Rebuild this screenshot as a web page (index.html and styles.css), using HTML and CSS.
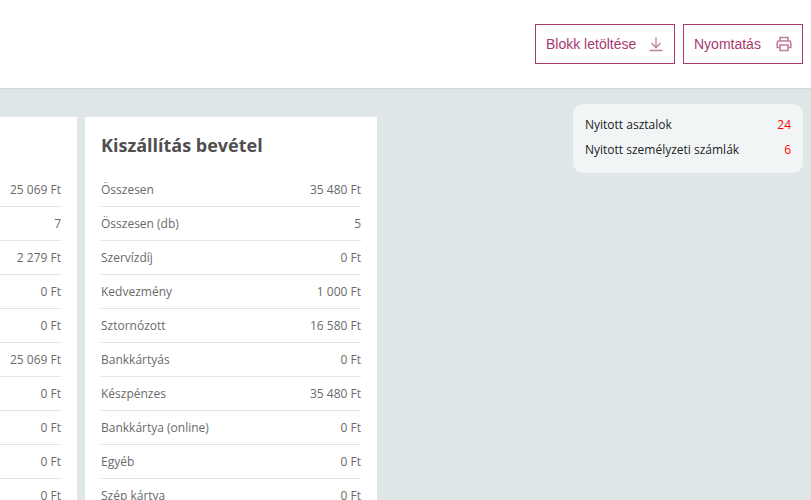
FILE: index.html
```html
<!DOCTYPE html>
<html lang="hu">
<head>
<meta charset="utf-8">
<title>Kimutatás</title>
<link rel="stylesheet" href="styles.css">
</head>
<body>
<header class="topbar">
  <button class="btn btn-download">Blokk letöltése
    <svg class="icon" viewBox="0 0 16 16" width="16" height="16"><path d="M8 1.5v9.5M3.5 7 8 11.5 12.500 7M1.500 14.500h13" fill="none" stroke="currentColor" stroke-width="1.3"/></svg>
  </button>
  <button class="btn btn-print">Nyomtatás
    <svg class="icon" viewBox="0 0 16 16" width="16" height="16"><path d="M4 5V1.500h8V5M4 11.500H1.200V6.500a1.500 1.500 0 0 1 1.500-1.500h10.600a1.500 1.500 0 0 1 1.500 1.500v5H12M4 9h8v5.500H4z" fill="none" stroke="currentColor" stroke-width="1.500"/></svg>
  </button>
</header>
<main class="content">
  <div class="cards">
    <section class="card card-left">
      <div class="card-head"></div>
      <div class="row"><span></span><span>25 069 Ft</span></div>
      <div class="row"><span></span><span>7</span></div>
      <div class="row"><span></span><span>2 279 Ft</span></div>
      <div class="row"><span></span><span>0 Ft</span></div>
      <div class="row"><span></span><span>0 Ft</span></div>
      <div class="row"><span></span><span>25 069 Ft</span></div>
      <div class="row"><span></span><span>0 Ft</span></div>
      <div class="row"><span></span><span>0 Ft</span></div>
      <div class="row"><span></span><span>0 Ft</span></div>
      <div class="row"><span></span><span>0 Ft</span></div>
    </section>
    <section class="card card-right">
      <h2 class="card-head">Kiszállítás bevétel</h2>
      <div class="row"><span>Összesen</span><span>35 480 Ft</span></div>
      <div class="row"><span>Összesen (db)</span><span>5</span></div>
      <div class="row"><span>Szervízdíj</span><span>0 Ft</span></div>
      <div class="row"><span>Kedvezmény</span><span>1 000 Ft</span></div>
      <div class="row"><span>Sztornózott</span><span>16 580 Ft</span></div>
      <div class="row"><span>Bankkártyás</span><span>0 Ft</span></div>
      <div class="row"><span>Készpénzes</span><span>35 480 Ft</span></div>
      <div class="row"><span>Bankkártya (online)</span><span>0 Ft</span></div>
      <div class="row"><span>Egyéb</span><span>0 Ft</span></div>
      <div class="row"><span>Szép kártya</span><span>0 Ft</span></div>
    </section>
  </div>
  <aside class="open-box">
    <div class="open-row"><span>Nyitott asztalok</span><span class="count">24</span></div>
    <div class="open-row"><span>Nyitott személyzeti számlák</span><span class="count">6</span></div>
  </aside>
</main>
</body>
</html>
```
FILE: styles.css
```css
* { box-sizing: border-box; }
html, body { margin: 0; height: 100%; overflow: hidden; }
body { font-family: "Open Sans", sans-serif; background: #dfe6e8; }
.topbar {
  height: 89px;
  background: #fff;
  border-bottom: 1px solid #d5d8d9;
  display: flex;
  justify-content: flex-end;
  align-items: flex-start;
  gap: 8px;
  padding: 24px 8px 0 0;
}
.btn {
  height: 40px;
  display: flex;
  align-items: center;
  justify-content: space-between;
  background: #fff;
  border: 1px solid #a83a70;
  border-radius: 0;
  color: #a83a70;
  font: 14px "Liberation Sans", Arial, sans-serif;
  padding: 0 10px;
}
.btn-download { width: 140px; }
.btn-print { width: 120px; }
.icon { color: #c27a9d; flex: none; }
.content {
  display: flex;
  justify-content: space-between;
  align-items: flex-start;
  padding: 15px 8px 0 0;
}
.cards { display: flex; gap: 8px; margin: 13px 0 0 -215px; }
.card { width: 292px; height: 420px; background: #fff; padding: 0 16px; }
.card-head {
  margin: 0;
  height: 56px;
  padding-top: 15px;
  font-size: 18px;
  line-height: 27px;
  font-weight: 700;
  color: #4f4f4f;
}
.row {
  height: 34px;
  display: flex;
  justify-content: space-between;
  align-items: center;
  border-bottom: 1px solid #dfe6e8;
  font-size: 12px;
  color: #6a6a6a;
}
.open-box {
  width: 230px;
  height: 69px;
  background: #f2f5f6;
  border-radius: 10px;
  padding: 8px 12px;
  font-size: 12px;
  color: #222;
}
.open-row { display: flex; justify-content: space-between; height: 25px; align-items: center; }
.count { color: #f00; }
```
